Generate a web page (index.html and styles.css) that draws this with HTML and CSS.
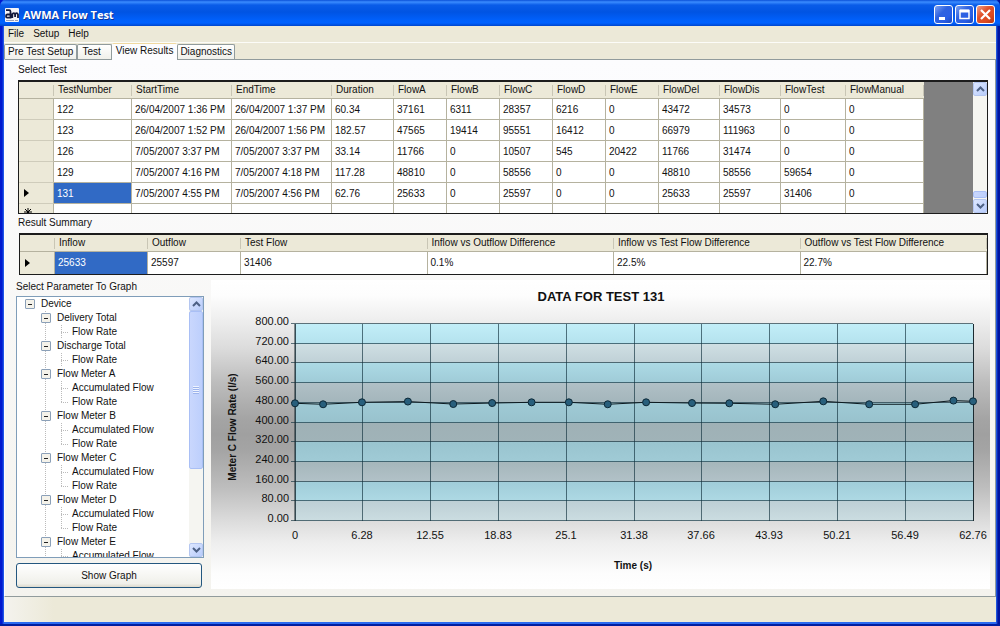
FILE: index.html
```html
<!DOCTYPE html>
<html lang="en">
<head>
<meta charset="UTF-8">
<meta name="viewport" content="width=device-width, initial-scale=1.0">
<title>AWMA Flow Test</title>
<link rel="stylesheet" href="styles.css">
</head>
<body>
<div class="window">
    <header class="titlebar">
        <svg class="app-icon" width="14" height="14" viewBox="0 0 14 14">
            <rect width="14" height="14" rx="1" fill="#f4f4f8"/>
            <path d="M1 12.500h8M10 12.500h3" stroke="#9aa0b8"/>
            <path d="M1 2.200h3.200q1.300 0 1.300 1.500v6H2.200q-1.200 0-1.200-1.500t1.200-1.700H5M7.300 10V5.500M7.300 6.500q.5-1.300 1.500-1.300t1.300 1.300V9M10.100 6.500q.5-1.300 1.500-1.300t1.400 1.300V10" fill="none" stroke="#151a3c" stroke-width="1.800"/>
        </svg>
        <h1>AWMA Flow Test</h1>
        <button type="button" class="win-btn" aria-label="Minimize">
            <svg width="19" height="19" viewBox="0 0 19 19"><path d="M5 13.500h6" stroke="#fff" stroke-width="3"/></svg>
        </button>
        <button type="button" class="win-btn" aria-label="Maximize">
            <svg width="19" height="19" viewBox="0 0 19 19"><path d="M5 6h9" stroke="#fff" stroke-width="3"/><rect x="5" y="5.500" width="9" height="8" fill="none" stroke="#fff" stroke-width="1.500"/></svg>
        </button>
        <button type="button" class="win-btn close" aria-label="Close">
            <svg width="19" height="19" viewBox="0 0 19 19"><path d="M5 5l9 9M14 5l-9 9" stroke="#fff" stroke-width="2.200"/></svg>
        </button>
    </header>

    <nav class="menu">
        <a href="#file">File</a>
        <a href="#setup">Setup</a>
        <a href="#help">Help</a>
    </nav>

    <div class="tabs" role="tablist">
        <button type="button" role="tab">Pre Test Setup</button>
        <button type="button" role="tab" class="tab-test">Test</button>
        <button type="button" role="tab" class="active" aria-selected="true">View Results</button>
        <button type="button" role="tab">Diagnostics</button>
    </div>

    <main class="panel">
        <h2>Select Test</h2>
        <div class="grid-box tests">
            <div class="grid-view">
                <table class="test-table">
                    <colgroup>
                        <col class="c-head"><col class="c-num"><col class="c-time"><col class="c-time"><col class="c-dur">
                        <col class="c-flow"><col class="c-flow"><col class="c-flow"><col class="c-flow"><col class="c-flow">
                        <col class="c-sum"><col class="c-sum"><col class="c-test"><col class="c-num">
                    </colgroup>
                    <thead>
                        <tr><th></th><th>TestNumber</th><th>StartTime</th><th>EndTime</th><th>Duration</th><th>FlowA</th><th>FlowB</th><th>FlowC</th><th>FlowD</th><th>FlowE</th><th>FlowDel</th><th>FlowDis</th><th>FlowTest</th><th>FlowManual</th></tr>
                    </thead>
                    <tbody>
                        <tr><th></th><td>122</td><td>26/04/2007 1:36 PM</td><td>26/04/2007 1:37 PM</td><td>60.34</td><td>37161</td><td>6311</td><td>28357</td><td>6216</td><td>0</td><td>43472</td><td>34573</td><td>0</td><td>0</td></tr>
                        <tr><th></th><td>123</td><td>26/04/2007 1:52 PM</td><td>26/04/2007 1:56 PM</td><td>182.57</td><td>47565</td><td>19414</td><td>95551</td><td>16412</td><td>0</td><td>66979</td><td>111963</td><td>0</td><td>0</td></tr>
                        <tr><th></th><td>126</td><td>7/05/2007 3:37 PM</td><td>7/05/2007 3:37 PM</td><td>33.14</td><td>11766</td><td>0</td><td>10507</td><td>545</td><td>20422</td><td>11766</td><td>31474</td><td>0</td><td>0</td></tr>
                        <tr><th></th><td>129</td><td>7/05/2007 4:16 PM</td><td>7/05/2007 4:18 PM</td><td>117.28</td><td>48810</td><td>0</td><td>58556</td><td>0</td><td>0</td><td>48810</td><td>58556</td><td>59654</td><td>0</td></tr>
                        <tr><th><svg width="5" height="8" viewBox="0 0 5 8"><path d="M0 0l5 4-5 4z"/></svg></th><td class="selected">131</td><td>7/05/2007 4:55 PM</td><td>7/05/2007 4:56 PM</td><td>62.76</td><td>25633</td><td>0</td><td>25597</td><td>0</td><td>0</td><td>25633</td><td>25597</td><td>31406</td><td>0</td></tr>
                        <tr class="new-row"><th><svg width="8" height="8" viewBox="0 0 8 8"><path d="M4 0v8M0 4h8M1 1l6 6M7 1L1 7" stroke="#000"/></svg></th><td></td><td></td><td></td><td></td><td></td><td></td><td></td><td></td><td></td><td></td><td></td><td></td><td></td></tr>
                    </tbody>
                </table>
            </div>
            <div class="scrollbar">
                <button type="button" aria-label="Scroll up"><svg width="9" height="6" viewBox="0 0 9 6"><path d="M1 5l3.500-3.500L8 5"/></svg></button>
                <div class="track end"><div class="thumb small"></div></div>
                <button type="button" aria-label="Scroll down"><svg width="9" height="6" viewBox="0 0 9 6"><path d="M1 1l3.500 3.500L8 1"/></svg></button>
            </div>
        </div>

        <h2>Result Summary</h2>
        <div class="grid-box summary">
            <table class="summary-table">
                <colgroup><col class="c-head"><col class="c-inout"><col class="c-inout"><col><col><col><col></colgroup>
                <thead>
                    <tr><th></th><th>Inflow</th><th>Outflow</th><th>Test Flow</th><th>Inflow vs Outflow Difference</th><th>Inflow vs Test Flow Difference</th><th>Outflow vs Test Flow Difference</th></tr>
                </thead>
                <tbody>
                    <tr><th><svg width="5" height="8" viewBox="0 0 5 8"><path d="M0 0l5 4-5 4z"/></svg></th><td class="selected">25633</td><td>25597</td><td>31406</td><td>0.1%</td><td>22.5%</td><td>22.7%</td></tr>
                </tbody>
            </table>
        </div>

        <div class="bottom">
            <section class="params">
                <h2>Select Parameter To Graph</h2>
                <div class="tree-box">
                    <ul class="tree">
                        <li><span class="node">Device</span>
                            <ul>
                                <li><span class="node">Delivery Total</span>
                                    <ul><li>Flow Rate</li></ul>
                                </li>
                                <li><span class="node">Discharge Total</span>
                                    <ul><li>Flow Rate</li></ul>
                                </li>
                                <li><span class="node">Flow Meter A</span>
                                    <ul><li>Accumulated Flow</li><li>Flow Rate</li></ul>
                                </li>
                                <li><span class="node">Flow Meter B</span>
                                    <ul><li>Accumulated Flow</li><li>Flow Rate</li></ul>
                                </li>
                                <li><span class="node">Flow Meter C</span>
                                    <ul><li>Accumulated Flow</li><li>Flow Rate</li></ul>
                                </li>
                                <li><span class="node">Flow Meter D</span>
                                    <ul><li>Accumulated Flow</li><li>Flow Rate</li></ul>
                                </li>
                                <li><span class="node">Flow Meter E</span>
                                    <ul><li>Accumulated Flow</li></ul>
                                </li>
                            </ul>
                        </li>
                    </ul>
                    <div class="scrollbar">
                        <button type="button" aria-label="Scroll up"><svg width="9" height="6" viewBox="0 0 9 6"><path d="M1 5l3.500-3.500L8 5"/></svg></button>
                        <div class="track"><div class="thumb large"><i></i></div></div>
                        <button type="button" aria-label="Scroll down"><svg width="9" height="6" viewBox="0 0 9 6"><path d="M1 1l3.500 3.500L8 1"/></svg></button>
                    </div>
                </div>
                <button type="button" class="show-graph">Show Graph</button>
            </section>

            <div class="chart">
                <svg id="chart" viewBox="0 0 779 309" role="img" aria-label="Data for test 131"></svg>
            </div>
        </div>
    </main>
    <footer class="status"></footer>
</div>
<script src="chart.js"></script>
</body>
</html>
```
FILE: styles.css
```css
* {
    box-sizing: border-box;
}
body {
    margin: 0;
    font-family: "Liberation Sans", Arial, sans-serif;
    font-size: 10px;
    line-height: 14px;
    color: #111;
}
button {
    font: inherit;
    color: inherit;
    padding: 0;
}
h1, h2 {
    margin: 0;
    font-size: 10px;
    font-weight: normal;
}
.window {
    display: flex;
    flex-direction: column;
    min-height: 100vh;
    padding: 0 4px 2px;
    background: linear-gradient(90deg, #0019cf 2px, #2a6af0 4px, #2a6af0 calc(100% - 4px), #0014a0 calc(100% - 2px));
    border-bottom: 2px solid #001ea0;
}

/* title bar */
.titlebar {
    display: flex;
    align-items: center;
    gap: 2px;
    height: 26px;
    margin: 0 -4px;
    padding: 3px 5px 0;
    background: linear-gradient(#0a50d8, #3b8cff 2px, #0a5ce8 5px, #0054e3 12px, #0060fb 20px, #0062ff 23px, #0046cc);
    border-radius: 6px 6px 0 0;
}
.titlebar h1 {
    flex: 1;
    margin-left: 2px;
    font-family: "Open Sans", sans-serif;
    font-size: 11px;
    font-weight: bold;
    color: #fff;
    text-shadow: 1px 1px #0c3398;
}
.win-btn {
    width: 19px;
    height: 19px;
    border: 1px solid #fff;
    border-radius: 3px;
    background: linear-gradient(135deg, #7ea2f2, #2e62e0 40%, #2a5fe6 70%, #1b47bd);
}
.win-btn svg {
    display: block;
    margin: -1px;
}
.win-btn.close {
    background: linear-gradient(135deg, #f0a088, #e0512b 40%, #dc4a20 70%, #b53511);
}

/* menu and tabs */
.menu {
    display: flex;
    gap: 9px;
    height: 17px;
    padding: 1px 4px;
    background: #ece9d8;
    border-bottom: 1px solid #fcfcf8;
}
.menu a {
    color: inherit;
    text-decoration: none;
}
.tabs {
    display: flex;
    align-items: flex-end;
    height: 16px;
    background: #ece9d8;
}
.tabs button {
    height: 15px;
    padding: 0 2px;
    border: 1px solid #919b9c;
    border-bottom: 0;
    border-radius: 2px 2px 0 0;
    background: linear-gradient(#fff, #f0f0ea);
    white-space: nowrap;
}
.tabs button:first-child {
    padding: 0 3px;
}
.tabs .tab-test {
    padding: 0 10px 0 4px;
}
.tabs button.active {
    position: relative;
    height: 17px;
    margin-bottom: -1px;
    padding: 0 3px 2px;
    background: #fcfcfe;
    border-color: #fcfcfe;
    border-top: 1px solid #f0d9a0;
}

/* tab page */
.panel {
    flex: 1;
    display: flex;
    flex-direction: column;
    padding: 3px 7px 7px 12px;
    background: linear-gradient(#fcfcfe, #f4f3ee);
    border: 1px solid #919b9c;
    border-left-color: #fcfcfe;
}
.panel > h2 {
    padding-left: 1px;
}
.grid-box {
    display: flex;
    margin-left: 1px;
    border: 1px solid #1c1c1c;
    border-top-width: 2px;
    background: #808080;
}
.tests {
    height: 134px;
    margin-bottom: 2px;
    margin-top: 3px;
}
.summary {
    margin-top: 3px;
    margin-left: 2px;
}
.grid-view {
    flex: 1;
    overflow: hidden;
}
table {
    table-layout: fixed;
    border-collapse: separate;
    border-spacing: 0;
    background: #fff;
}
.test-table {
    width: 905px;
}
.summary-table {
    width: 100%;
}
.c-head { width: 35px; }
.c-num { width: 78px; }
.c-time { width: 100px; }
.c-dur { width: 62px; }
.c-flow { width: 53px; }
.c-sum { width: 61px; }
.c-test { width: 65px; }
.c-inout { width: 93px; }
th, td {
    padding: 0 3px;
    font-weight: normal;
    text-align: left;
    white-space: nowrap;
    overflow: hidden;
    border-right: 1px solid #b5b29f;
    border-bottom: 1px solid #b5b29f;
}
thead th {
    height: 17px;
    padding: 0 4px;
    background: linear-gradient(90deg, #ece9d8 calc(100% - 1px), #c9c6b5 0) 0 3px / 100% 11px no-repeat #ece9d8;
    border-right: 0;
}
tbody th {
    padding: 0 5px;
    background: #ece9d8;
    border-bottom-color: #cfccbb;
}
tbody td, tbody th {
    height: 21px;
}
.tests tbody td {
    padding-top: 2px;
}
.summary tbody td, .summary tbody th {
    height: 22px;
    border-bottom: 0;
}
th svg {
    display: block;
}
.new-row th {
    vertical-align: top;
    padding-top: 4px;
}
.selected {
    background: #316ac5;
    color: #fff;
}

/* scrollbars */
.scrollbar {
    display: flex;
    flex-direction: column;
    width: 14px;
    background: #f5f5f1;
}
.scrollbar button {
    height: 14px;
    border: 1px solid #b4c6f0;
    border-radius: 2px;
    background: linear-gradient(135deg, #dde7ff, #b8ccfb);
}
.scrollbar button svg {
    display: block;
    margin: auto;
}
.scrollbar path {
    fill: none;
    stroke: #4d6185;
    stroke-width: 2;
}
.track {
    flex: 1;
    display: flex;
    flex-direction: column;
}
.track.end {
    justify-content: flex-end;
}
.thumb {
    display: flex;
    align-items: center;
    justify-content: center;
    border: 1px solid #a9bff5;
    border-radius: 2px;
    background: linear-gradient(90deg, #c9d7fd, #bdcffc);
}
.thumb.small {
    height: 7px;
    margin-bottom: 1px;
}
.thumb.large {
    height: 68%;
}
.thumb i {
    width: 6px;
    height: 8px;
    background: repeating-linear-gradient(#eef3ff 0 1px, #9db4ec 1px 2px);
}

/* parameter tree */
.bottom {
    flex: 1;
    display: flex;
    gap: 7px;
    margin-right: -2px;
    padding-top: 5px;
}
.params {
    display: flex;
    flex-direction: column;
    width: 188px;
    margin-left: -1px;
}
.params h2 {
    margin-bottom: 2px;
}
.tree-box {
    flex: 1 0 262px;
    height: 262px;
    display: flex;
    overflow: hidden;
    border: 1px solid #7f9db9;
    background: #fff;
}
.tree {
    flex: 1;
    margin: 0;
    padding: 0 0 0 8px;
}
.tree, .tree ul {
    list-style: none;
}
.tree ul {
    margin: 0;
    padding: 0 0 0 16px;
}
.tree .node {
    display: flex;
    align-items: center;
    gap: 6px;
}
.tree .node::before {
    content: "";
    width: 8px;
    height: 8px;
    border: 1px solid #8ba0b8;
    border-radius: 1px;
    background: linear-gradient(#222, #222) center / 4px 1px no-repeat, #f4f2ea;
}
.tree > li > ul {
    background: repeating-linear-gradient(#bbb 0 1px, transparent 1px 2px) 20px 0 / 1px 100% no-repeat;
}
.tree ul ul {
    padding-left: 20px;
}
.tree ul ul li {
    padding-left: 11px;
    background:
        repeating-linear-gradient(90deg, #bbb 0 1px, transparent 1px 2px) 0 7px / 8px 1px no-repeat,
        repeating-linear-gradient(#bbb 0 1px, transparent 1px 2px) 0 0 / 1px 100% no-repeat;
}
.tree ul ul li:last-child:not(:only-child) {
    background-size: 8px 1px, 1px 8px;
}
.show-graph {
    height: 25px;
    margin: 5px 2px 1px 0;
    border: 1px solid #24577f;
    border-radius: 3px;
    background: linear-gradient(#fff, #f0f0ea 85%, #dcd9cc);
}

/* chart */
.chart {
    flex: 1;
    min-width: 0;
    height: 309px;
    background: linear-gradient(#fff 0, #fdfdfd 5%, #eee 13%, #dcdcdc 22%, #bdbdbd 33%, #a4a4a4 45%, #a0a0a0 50%, #a4a4a4 55%, #bdbdbd 67%, #dcdcdc 78%, #eee 85%, #fdfdfd 95%, #fff);
}
.chart svg {
    display: block;
    width: 100%;
    height: 100%;
}
.chart text {
    font-size: 11px;
    fill: #111;
}
.chart .title {
    font-size: 13px;
    font-weight: bold;
}
.chart .axis {
    font-size: 10px;
    font-weight: bold;
}
.chart .gridline {
    stroke: #10303c;
    stroke-opacity: .65;
}
.chart .edge {
    stroke: #1c2a30;
}
.chart .series {
    fill: none;
    stroke: #0c1a20;
}
.chart circle {
    fill: #285f7c;
    stroke: #0c2836;
}

.status {
    height: 25px;
    background: linear-gradient(90deg, #f4f3ee, #ece9d8 50px);
}
```
FILE: chart.js
```js
var svg = document.getElementById("chart");
var left = 84, right = 762, top0 = 44, bottom = 241;
var maxTime = 62.76, maxFlow = 800;

// band colours, top to bottom
var bands = [
    ["#c2eef8", "#b4e2ee"], ["#cfdfe3", "#bfd0d6"], ["#acdae5", "#9fcbd7"], ["#b0c0c6", "#a3b5bb"],
    ["#9fcad5", "#98c2cd"], ["#9fb1b6", "#a0b3b8"], ["#99c4cf", "#a0cbd6"], ["#a5b6bb", "#b2c2c8"],
    ["#a0cdd9", "#aed9e4"], ["#bdcfd5", "#cbdde1"]
];
// [time, flow rate]
var points = [
    [0, 478], [2.6, 474], [6.2, 482], [10.45, 485], [14.65, 475], [18.25, 479], [21.9, 482], [25.35, 482], [28.95, 474],
    [32.5, 482], [36.75, 479], [40.2, 478], [44.45, 474], [48.9, 486], [53.15, 474], [57.4, 474], [60.95, 489], [62.76, 486]
];
var xLabels = ["0", "6.28", "12.55", "18.83", "25.1", "31.38", "37.66", "43.93", "50.21", "56.49", "62.76"];

function add(name, attrs, text) {
    var el = document.createElementNS("http://www.w3.org/2000/svg", name);
    for (var key in attrs) el.setAttribute(key, attrs[key]);
    if (text) el.textContent = text;
    svg.appendChild(el);
    return el;
}
function xPos(t) { return left + (right - left) * t / maxTime; }
function yPos(v) { return bottom - (bottom - top0) * v / maxFlow; }

for (var i = 0; i < 10; i++) {
    var y = Math.round(yPos(800 - i * 80));
    var next = Math.round(yPos(720 - i * 80));
    var grad = add("linearGradient", {id: "band" + i, x1: 0, y1: 0, x2: 0, y2: 1});
    for (var s = 0; s < 2; s++) {
        var stop = document.createElementNS("http://www.w3.org/2000/svg", "stop");
        stop.setAttribute("offset", s);
        stop.setAttribute("stop-color", bands[i][s]);
        grad.appendChild(stop);
    }
    add("rect", {x: left, y: y, width: right - left, height: next - y, fill: "url(#band" + i + ")"});
}
for (var i = 0; i <= 10; i++) {
    var gy = Math.round(yPos(i * 80)) - 0.5;
    var gx = Math.floor(left + (right - left) * i / 10);
    add("line", {x1: left - 4, y1: gy, x2: right, y2: gy, class: "gridline"});
    add("line", {x1: gx + 0.5, y1: top0, x2: gx + 0.5, y2: bottom, class: "gridline"});
    add("text", {x: 78, y: Math.floor(gy) + 2, "text-anchor": "end"}, (i * 80).toFixed(2));
    add("text", {x: gx, y: 259, "text-anchor": "middle"}, xLabels[i]);
}
add("line", {x1: left, y1: top0, x2: left, y2: bottom, class: "edge"});
add("line", {x1: right + 0.5, y1: top0, x2: right + 0.5, y2: bottom, class: "edge"});

add("polyline", {points: points.map(function (p) { return xPos(p[0]) + "," + yPos(p[1]); }).join(" "), class: "series"});
points.forEach(function (p) {
    add("circle", {cx: xPos(p[0]), cy: yPos(p[1]), r: 3.5});
});

add("text", {x: 390, y: 21, "text-anchor": "middle", class: "title"}, "DATA FOR TEST 131");
add("text", {x: 422, y: 289, "text-anchor": "middle", class: "axis"}, "Time (s)");
add("text", {transform: "translate(25 147) rotate(-90)", "text-anchor": "middle", class: "axis"}, "Meter C Flow Rate (l/s)");
```
